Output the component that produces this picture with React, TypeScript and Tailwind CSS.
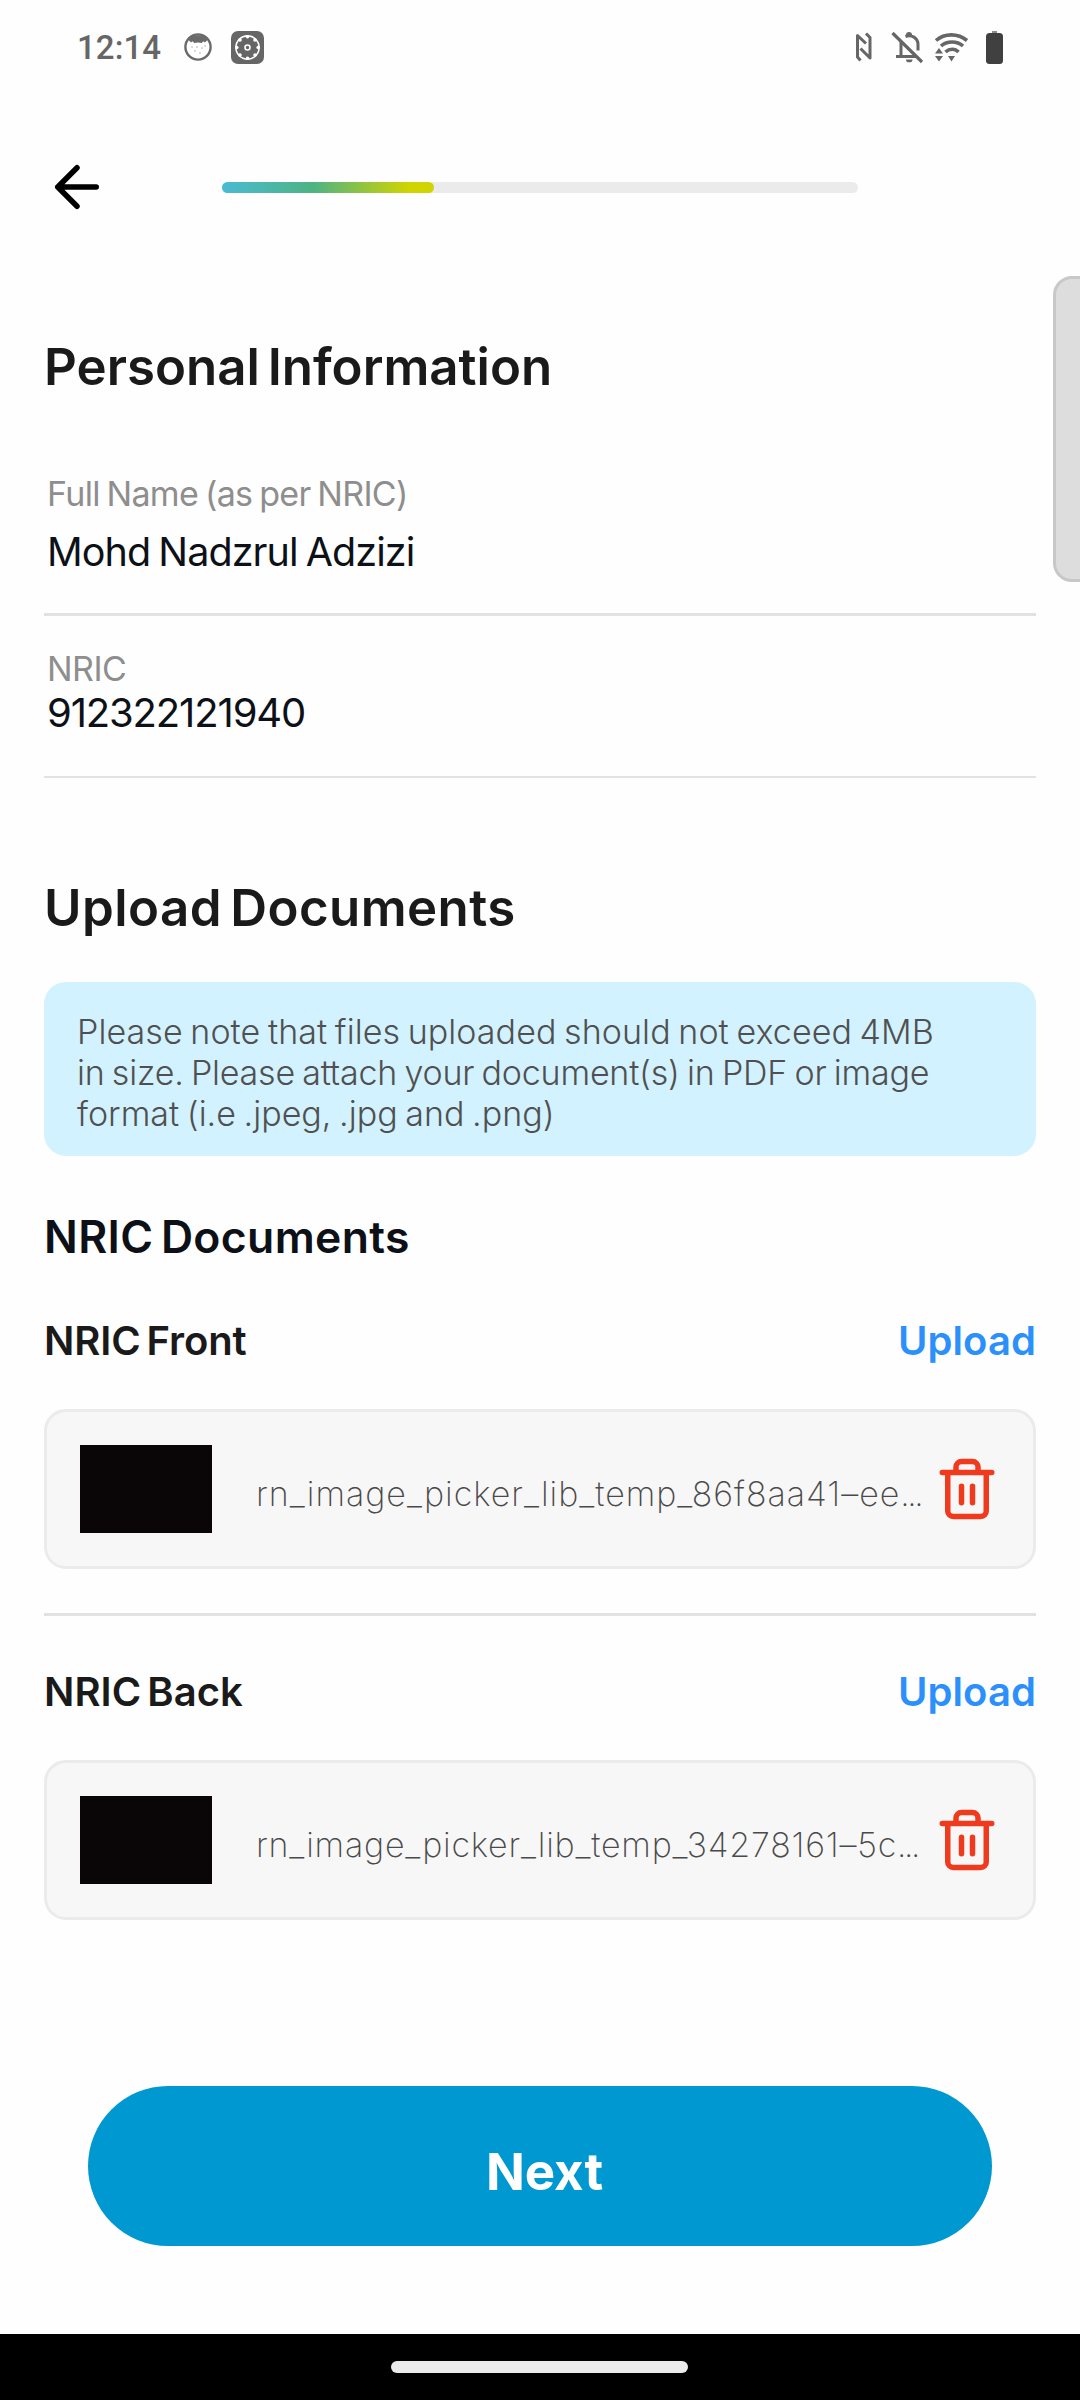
import type { ReactNode } from "react";

function StatusBar() {
  return (
    <div className="flex h-[94px] items-center justify-between pl-[77px] pr-[77px]">
      <div className="flex items-center">
        <span className="w-[106px] whitespace-nowrap pt-[2px] font-['Roboto'] text-[33px] font-medium leading-[40px] tracking-[0.1px] text-[#666666]">
          12:14
        </span>
        <svg width="30" height="30" viewBox="0 0 30 30">
          <circle cx="15" cy="15" r="12.6" fill="#fff" stroke="#6a6a6a" strokeWidth="2.4" />
          <path
            d="M5 7C8 2 22 2 25 7c-1 1.500-2 2.500-3 3.500-1-1.500-2.500-1.500-3 .5-2.500-.800-5.500-.800-8 0-.500-2-2-2-3-.5C7 9.500 6 8.500 5 7z"
            fill="#6a6a6a"
          />
          <g fill="#9a9a9a">
            <circle cx="9" cy="15" r="0.7" />
            <circle cx="14" cy="15" r="0.7" />
            <circle cx="19" cy="16" r="0.7" />
            <circle cx="12" cy="19" r="0.7" />
            <circle cx="17" cy="21" r="0.7" />
            <circle cx="22" cy="14" r="0.7" />
          </g>
        </svg>
        <svg className="ml-[18px]" width="33" height="33" viewBox="0 0 33 33">
          <rect width="33" height="33" rx="7" fill="#666666" />
          <circle cx="16.5" cy="16.5" r="11.6" fill="none" stroke="#fff" strokeWidth="1.6" />
          <g fill="#fff">
            <circle cx="16.5" cy="5.8" r="1.8" />
            <circle cx="16.5" cy="27.2" r="1.8" />
            <circle cx="5.8" cy="16.5" r="1.8" />
            <circle cx="27.2" cy="16.5" r="1.8" />
            <circle cx="9" cy="9" r="1.8" />
            <circle cx="24" cy="9" r="1.8" />
            <circle cx="9" cy="24" r="1.8" />
            <circle cx="24" cy="24" r="1.8" />
          </g>
          <circle cx="16.5" cy="16.5" r="2.5" fill="none" stroke="#fff" strokeWidth="1.6" />
        </svg>
      </div>
      <svg width="150" height="36" viewBox="0 0 150 36">
        <g fill="none" stroke="#666666" strokeWidth="3">
          <path d="M7.500 31.500 4.500 28V6.500l8.500 8M13 4.500l4 4v20.500l-9.500-9.500" strokeLinejoin="round" />
          <path d="M39.500 4 69 33" strokeWidth="3.200" />
          <path d="M43 27.500h21M48 12v15M52.500 7.500c6-2.500 12.500 1.500 12.500 8v6" />
          <path d="M83 11.500c8.500-7.500 22-7.500 31 0" strokeWidth="3.600" />
          <path d="M88 17c6-5.300 16-5.300 22 0" strokeWidth="3.600" />
          <path d="M92.500 23c4-3.700 9.500-3.700 13 0" strokeWidth="3.600" />
        </g>
        <g fill="#666666">
          <path d="M53 6a3 3 0 0 1 6 0v2h-6z" />
          <path d="M53 30.500h6.500a3.200 2.800 0 0 1-6.500 0z" />
          <path d="M82 24.500 86 19l4 5.500zM82 27h8l-4 5.500zM95 27h7l-3.500 5.500z" />
        </g>
        <path d="M139 2h5v3h-5z" fill="#8a8a8a" />
        <rect x="133" y="4" width="17" height="31" rx="3.500" fill="#404040" />
      </svg>
    </div>
  );
}

function Divider({ className }: { className: string }) {
  return <div className={`bg-[#e2e2e2] ${className}`} />;
}

function SectionTitle({ className, children }: { className: string; children: ReactNode }) {
  return (
    <h2
      className={`whitespace-nowrap text-[51px] font-semibold leading-[64px] text-[#1a1a1a] [word-spacing:-5px] ${className}`}
    >
      {children}
    </h2>
  );
}

function TrashIcon() {
  return (
    <svg
      width="66"
      height="66"
      viewBox="0 0 24 24"
      fill="none"
      stroke="#ef3a1e"
      strokeWidth="2"
      strokeLinecap="round"
      strokeLinejoin="round"
    >
      <path d="M3 6h18M19 6v14a2 2 0 0 1-2 2H7a2 2 0 0 1-2-2V6M8 6V4a2 2 0 0 1 2-2h4a2 2 0 0 1 2 2v2M10 11v6M14 11v6" />
    </svg>
  );
}

interface DocumentProps {
  title: string;
  titleClass: string;
  file: string;
  fileClass: string;
}

function DocumentUpload({ title, titleClass, file, fileClass }: DocumentProps) {
  return (
    <section className="mt-[51px]">
      <div className="flex justify-between whitespace-nowrap text-[40px] font-semibold leading-[50px]">
        <h4 className={`text-[#1a1a1a] [word-spacing:-4px] ${titleClass}`}>{title}</h4>
        <button className="tracking-[0.08px] text-[#2b90fb]">Upload</button>
      </div>
      <div className="mt-[43px] flex h-[160px] items-start rounded-[22px] border-[3px] border-[#ebebeb] bg-[#f7f7f7] pl-[33px] pt-[33px]">
        <div className="h-[88px] w-[132px] bg-[#0a0608]" />
        <div className="ml-[44px] mt-[28px] w-[678px] whitespace-nowrap text-[34px] font-extralight leading-[42px] text-[#4a4a4a]">
          <span className={fileClass}>{file}</span>
          <span className="tracking-[-2.4px]">...</span>
        </div>
        <button className="mt-[11px] shrink-0">
          <TrashIcon />
        </button>
      </div>
    </section>
  );
}

export default function App() {
  return (
    <div className="relative flex h-[2400px] w-[1080px] flex-col overflow-hidden bg-[#fefefe] font-['Inter',sans-serif]">
      <StatusBar />
      <header className="flex h-[186px] items-center pl-[44px]">
        <svg
          width="66"
          height="66"
          viewBox="0 0 24 24"
          fill="none"
          stroke="#000"
          strokeWidth="2"
          strokeLinecap="round"
          strokeLinejoin="round"
        >
          <path d="M19 12H5M12 19l-7-7 7-7" />
        </svg>
        <div className="ml-[112px] h-[11px] w-[636px] rounded-full bg-[#ebebeb]">
          <div className="h-full w-[212px] rounded-full bg-[linear-gradient(90deg,#4abbd3_0%,#4db384_43%,#d0d400_88%)]" />
        </div>
      </header>

      <main className="flex flex-col px-[44px]">
        <SectionTitle className="mt-[55px] tracking-[0px]">Personal Information</SectionTitle>

        <div className="mt-[74px] pl-[3px]">
          <div className="whitespace-nowrap text-[34px] leading-[42px] tracking-[-0.7px] text-[#8e8e8e] [word-spacing:-2px]">
            Full Name (as per NRIC)
          </div>
          <div className="mt-[12px] whitespace-nowrap text-[39.5px] leading-[50px] tracking-[-0.93px] text-[#0d1117] [word-spacing:-2px]">
            Mohd Nadzrul Adzizi
          </div>
        </div>
        <Divider className="mt-[36px] h-[3px]" />

        <div className="mt-[32px] pl-[3px]">
          <div className="text-[34px] leading-[42px] tracking-[-0.54px] text-[#8e8e8e]">NRIC</div>
          <div className="text-[40px] leading-[46px] tracking-[-1.14px] text-[#0d1117]">912322121940</div>
        </div>
        <Divider className="mt-[40px] h-[2px]" />

        <SectionTitle className="mt-[98px] tracking-[0.42px]">Upload Documents</SectionTitle>

        <div className="mt-[42px] h-[174px] whitespace-nowrap rounded-[22px] bg-[#d2f2ff] pl-[33px] pt-[29px] text-[34px] font-light leading-[41px] text-[#505050] [word-spacing:-2px]">
          <p className="tracking-[0.07px]">Please note that files uploaded should not exceed 4MB</p>
          <p className="tracking-[-0.21px]">in size. Please attach your document(s) in PDF or image</p>
          <p className="tracking-[0.02px]">format (i.e .jpeg, .jpg and .png)</p>
        </div>

        <h3 className="mt-[53px] text-[44.5px] font-semibold leading-[56px] tracking-[0.35px] text-[#0d1117] [word-spacing:-4px]">
          NRIC Documents
        </h3>

        <DocumentUpload
          title="NRIC Front"
          titleClass="tracking-[-0.1px]"
          file="rn_image_picker_lib_temp_86f8aa41–ee"
          fileClass="tracking-[0.98px]"
        />
        <Divider className="mt-[44px] h-[3px]" />
        <DocumentUpload
          title="NRIC Back"
          titleClass="tracking-[0.03px]"
          file="rn_image_picker_lib_temp_34278161–5c"
          fileClass="tracking-[0.78px]"
        />

        <button className="mx-[44px] mt-[166px] h-[160px] rounded-full bg-[#0098d0] pl-[9px] pt-[11px] text-[51px] font-bold leading-[64px] text-white">
          Next
        </button>
      </main>

      <div className="mt-auto flex h-[66px] items-center justify-center bg-black">
        <div className="mr-[2px] h-[12px] w-[297px] rounded-full bg-[#ebebeb]" />
      </div>

      <div className="absolute right-[-3px] top-[276px] h-[306px] w-[30px] rounded-l-[19px] border-[3px] border-[#c8c8c8] bg-[#dddddd]" />
    </div>
  );
}
